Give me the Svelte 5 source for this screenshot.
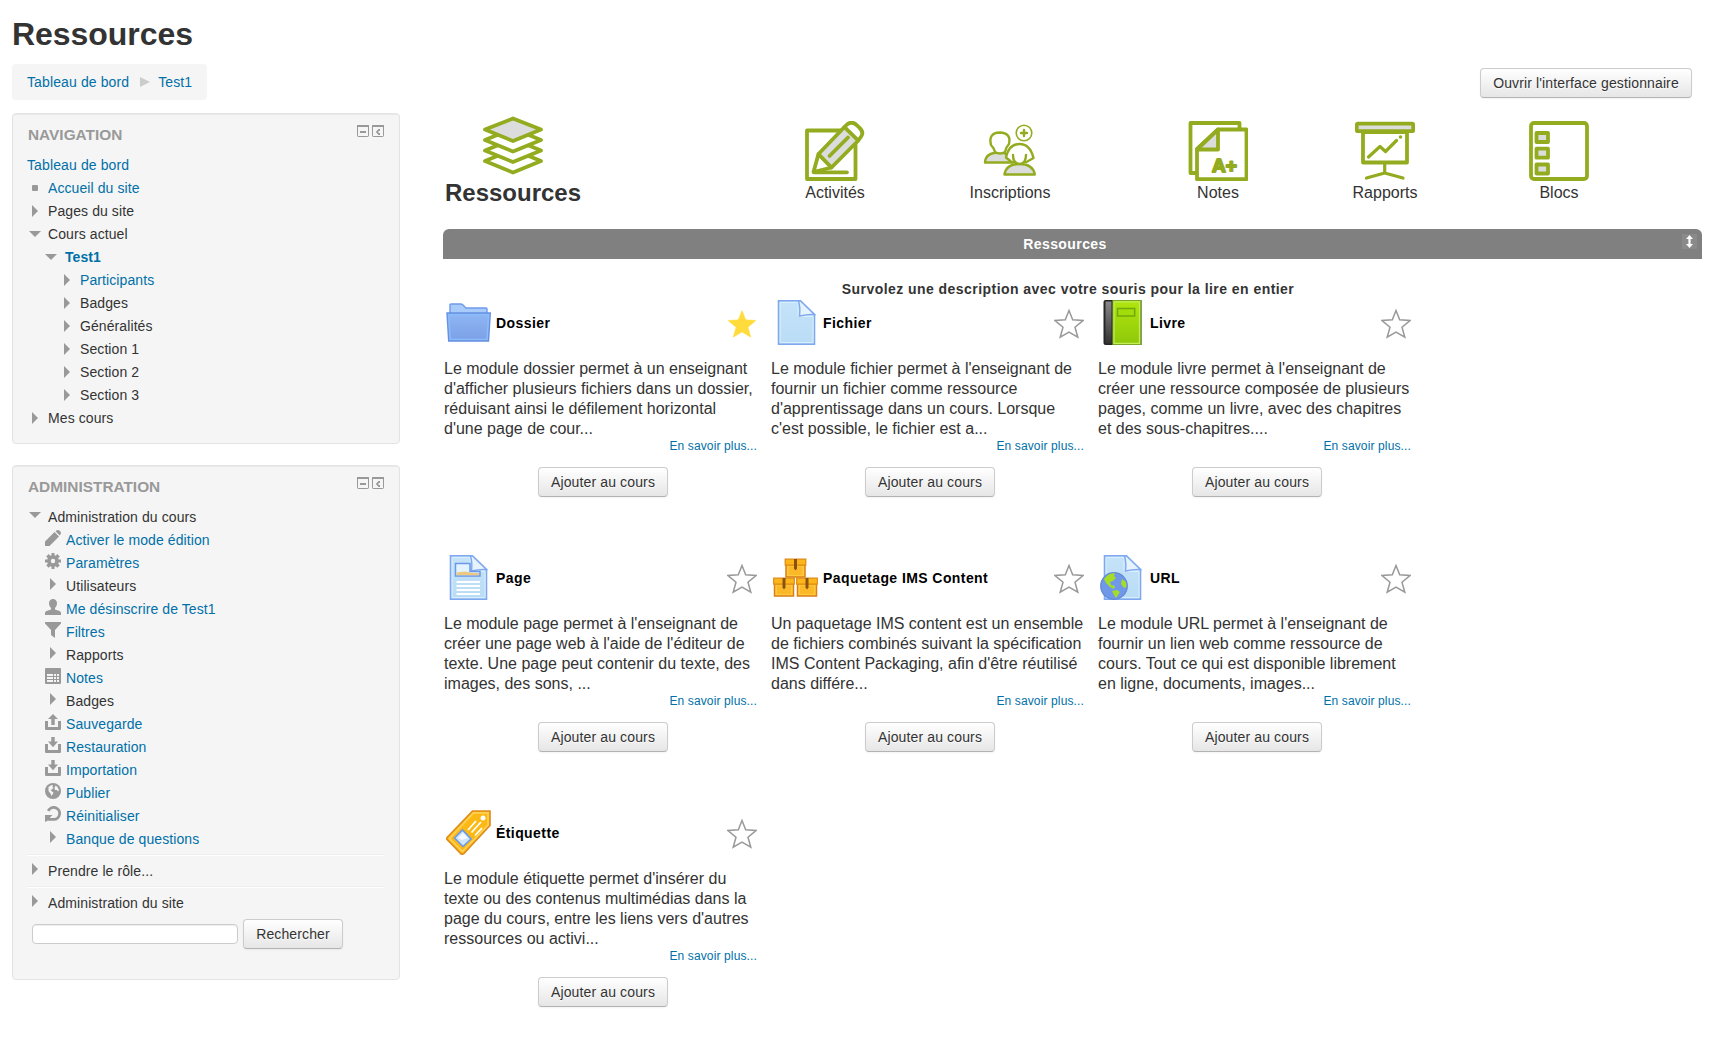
<script>
  const nav = [
    { icon: 'none', text: 'Tableau de bord', link: true, level: 'root' },
    { icon: 'dot', text: 'Accueil du site', link: true, level: 'l1' },
    { icon: 'right', text: 'Pages du site', level: 'l1' },
    { icon: 'down', text: 'Cours actuel', level: 'l1' },
    { icon: 'down', text: 'Test1', link: true, level: 'l2' },
    { icon: 'right', text: 'Participants', link: true, level: 'l3' },
    { icon: 'right', text: 'Badges', level: 'l3' },
    { icon: 'right', text: 'Généralités', level: 'l3' },
    { icon: 'right', text: 'Section 1', level: 'l3' },
    { icon: 'right', text: 'Section 2', level: 'l3' },
    { icon: 'right', text: 'Section 3', level: 'l3' },
    { icon: 'right', text: 'Mes cours', level: 'l1' }
  ];

  const admin = [
    { icon: 'pencil', text: 'Activer le mode édition', link: true },
    { icon: 'gear', text: 'Paramètres', link: true },
    { icon: 'right', text: 'Utilisateurs' },
    { icon: 'user', text: 'Me désinscrire de Test1', link: true },
    { icon: 'filter', text: 'Filtres', link: true },
    { icon: 'right', text: 'Rapports' },
    { icon: 'table', text: 'Notes', link: true },
    { icon: 'right', text: 'Badges' },
    { icon: 'upload', text: 'Sauvegarde', link: true },
    { icon: 'download', text: 'Restauration', link: true },
    { icon: 'download', text: 'Importation', link: true },
    { icon: 'globe', text: 'Publier', link: true },
    { icon: 'reset', text: 'Réinitialiser', link: true },
    { icon: 'right', text: 'Banque de questions', link: true }
  ];

  const tabs = ['Ressources', 'Activités', 'Inscriptions', 'Notes', 'Rapports', 'Blocs'];

  const cards = [
    { kind: 'folder', title: 'Dossier', starred: true, text: "Le module dossier permet à un enseignant\nd'afficher plusieurs fichiers dans un dossier,\nréduisant ainsi le défilement horizontal\nd'une page de cour..." },
    { kind: 'file', title: 'Fichier', text: "Le module fichier permet à l'enseignant de\nfournir un fichier comme ressource\nd'apprentissage dans un cours. Lorsque\nc'est possible, le fichier est a..." },
    { kind: 'book', title: 'Livre', text: "Le module livre permet à l'enseignant de\ncréer une ressource composée de plusieurs\npages, comme un livre, avec des chapitres\net des sous-chapitres...." },
    { kind: 'page', title: 'Page', text: "Le module page permet à l'enseignant de\ncréer une page web à l'aide de l'éditeur de\ntexte. Une page peut contenir du texte, des\nimages, des sons, ..." },
    { kind: 'ims', title: 'Paquetage IMS Content', text: "Un paquetage IMS content est un ensemble\nde fichiers combinés suivant la spécification\nIMS Content Packaging, afin d'être réutilisé\ndans différe..." },
    { kind: 'url', title: 'URL', text: "Le module URL permet à l'enseignant de\nfournir un lien web comme ressource de\ncours. Tout ce qui est disponible librement\nen ligne, documents, images..." },
    { kind: 'tag', title: 'Étiquette', text: "Le module étiquette permet d'insérer du\ntexte ou des contenus multimédias dans la\npage du cours, entre les liens vers d'autres\nressources ou activi..." }
  ];
</script>

{#snippet glyph(name)}
  <svg class="glyph" viewBox="0 0 16 16">
    {#if name === 'dot'}
      <rect x="5" y="5" width="6" height="6" rx="1" />
    {:else if name === 'right'}
      <path d="M5 2v12l6-6z" />
    {:else if name === 'down'}
      <path d="M2 5h12l-6 6z" />
    {:else if name === 'pencil'}
      <path d="M0 16v-4.500L9.500 2 14 6.500 4.500 16zM10.500 1.300l.9-.8q1.800-1.200 3.600.6 1.600 1.700.4 3.500l-.7.8z" />
    {:else if name === 'gear'}
      <path fill-rule="evenodd" d="M6.500 0h3v2.200l1.200.5 1.600-1.600 2.500 2.500-1.600 1.600.5 1.300H16v3h-2.300l-.5 1.200 1.600 1.600-2.500 2.500-1.600-1.600-1.200.5V16h-3v-2.300l-1.200-.5-1.600 1.600-2.500-2.500 1.600-1.600-.5-1.200H0v-3h2.300l.5-1.300-1.600-1.600 2.500-2.500 1.600 1.600 1.200-.5zM8 5.800a2.200 2.200 0 1 0 0 4.400 2.200 2.200 0 0 0 0-4.400z" />
    {:else if name === 'user'}
      <path d="M8 0c2.400 0 4 1.800 4 4.300 0 2-.9 3.700-2 4.700v1.500l4.500 1.500q1.500.6 1.500 2V16H0v-2q0-1.400 1.500-2L6 10.500V9C4.900 8 4 6.300 4 4.300 4 1.800 5.600 0 8 0z" />
    {:else if name === 'filter'}
      <path d="M0 0h16v1.500L10 8v8l-4-3V8L0 1.500z" />
    {:else if name === 'table'}
      <path fill-rule="evenodd" d="M1 0h14q1 0 1 1v14q0 1-1 1H1q-1 0-1-1V1q0-1 1-1zM2 6v2h6V6zm7 0v2h2V6zm3 0v2h2V6zM2 9v2h6V9zm7 0v2h2V9zm3 0v2h2V9zM2 12v2h6v-2zm7 0v2h2v-2zm3 0v2h2v-2z" />
    {:else if name === 'upload'}
      <path d="M8 0l5 5h-3.300v6H6.300V5H3zM0 7h3v6h10V7h3v8q0 1-1 1H1q-1 0-1-1z" />
    {:else if name === 'download'}
      <path d="M6.300 0h3.400v4.500H13l-5 5.700-5-5.700h3.300zM0 7h3v6h10V7h3v8q0 1-1 1H1q-1 0-1-1z" />
    {:else if name === 'globe'}
      <circle cx="8" cy="8" r="8" />
      <path class="cut" d="M3.500 4L6 2.200l2-.2-.7 1.500 1.200 1L7 6.500 5.500 7 7 8.500l1.500 1-1 2-1 1.500L5.500 10.500 3.500 8zM10.500 2.500l2 1.500 1.500 3-1 1.500-1-1.500h-2L9.500 5z" />
    {:else if name === 'reset'}
      <path d="M3.200 4.800A6 6 0 1 1 8.800 13.400H5" fill="none" stroke="#999" stroke-width="2.800" />
      <path d="M0 9h7.500L5 11.500V15l-2-.5L0 16z" />
    {/if}
  </svg>
{/snippet}

{#snippet controls()}
  <span class="controls">
    <svg viewBox="0 0 12 12"><rect x=".5" y=".5" width="11" height="11" rx=".7" /><path d="M0 1h12M3 7h6" /></svg>
    <svg viewBox="0 0 12 12"><rect x=".5" y=".5" width="11" height="11" rx=".7" /><path d="M0 1h12" /><path class="solid" d="M3.800 7l2.700-3h1.500v2H6.500v2H8v2H6.500z" /></svg>
  </span>
{/snippet}

{#snippet tabIcon(name)}
  <svg class="tab-icon" viewBox="0 0 60 60">
    {#if name === 'Ressources'}
      <path class="w" d="M2 45l28-11.500L58 45 30 56.500z" />
      <path class="w" d="M2 34.500L30 23l28 11.500L30 46z" />
      <path class="w" d="M2 24l28-11.500L58 24 30 35.500z" />
      <path class="g" d="M2 13.500L30 2.500l28 11-28 11.500z" />
    {:else if name === 'Activités'}
      <rect class="w" x="2" y="9.500" width="48.500" height="48.500" />
      <path class="w" d="M13.500 33L8.500 51l18-4.500z" />
      <path class="g" d="M13.500 33L39.500 6l13.800 13.500L26.500 46.500z" />
      <path class="w" d="M39.500 6l2.500-2.500q5-4 10 .8l2.200 2.200q5 4.500 2 9L53.300 19.500z" />
      <path d="M43 16.500L24.500 35M9 51.300h33" />
    {:else if name === 'Inscriptions'}
      <g class="fine">
        <path class="g" d="M5 41.500Q5.500 31.500 19.500 31.500q10 0 13 10z" />
        <path class="w" d="M15 31q-1-4-4-7-3-12 8.700-12.500Q31.500 12 29 23q-3 3-4 8-5 3-10 0z" />
        <path class="w" d="M26 36.500Q29 23 39.500 23T53.500 37l-7 4h-15z" />
        <path class="g" d="M24.500 53.500Q26 43 39.500 43T54.800 53.500z" />
        <path class="w" d="M33 34q0 8.500 6.500 9 6.500-.5 6.500-9" />
      </g>
      <circle class="w thin" cx="44" cy="12" r="7.800" />
      <path class="fine" d="M41 12h6M44 9v6" />
    {:else if name === 'Notes'}
      <path class="w" d="M2.500 2h49v50h-49z" />
      <path class="w" d="M30 8.500h28.500v49.700H9V28z" />
      <path class="g" d="M30 8.500v20H9z" />
      <text x="24" y="50.500">A+</text>
    {:else if name === 'Rapports'}
      <path class="w" d="M8 11h44v30.500H8z" />
      <rect class="g" x="1.700" y="2.700" width="56.500" height="7.500" rx="1" />
      <path class="lines" d="M29.700 41.500v10M11.500 57l18.200-5L48 57M13.500 36L25 25.500l5.500 5 11-11" />
      <circle class="s" cx="45.500" cy="16" r="1.800" />
    {:else}
      <rect class="w" x="2" y="2" width="56" height="56" rx="3" />
      <g class="g"><rect x="7.500" y="12" width="11.500" height="9" /><rect x="7.500" y="27.700" width="11.500" height="9" /><rect x="7.500" y="43.500" width="11.500" height="9" /></g>
    {/if}
  </svg>
{/snippet}

{#snippet sheet()}
  <path d="M4.500.8h21.800L40.500 14.500v29.700h-36z" fill="url(#paper)" stroke="#7fa8f0" stroke-width="1.600" />
  <path d="M6.200 2.500H24v14h15v26H6.200z" fill="none" stroke="#d9edfc" stroke-width="1" />
  <path d="M24.500 1q2 6 1 15 8-2 15-1.500L26.300.8z" fill="#e6f3fd" stroke="#7fa8f0" stroke-width="1.400" />
{/snippet}

{#snippet crate()}
  <path d="M1.500 6h19v12.500h-19z" fill="#ffcb3c" stroke="#d97f14" stroke-width="1.500" />
  <path d="M4 8h14v8.500H4z" fill="#fbb92a" />
  <path d="M.7.700h20.600v6H.7z" fill="#fdb61a" stroke="#dd8a14" stroke-width="1.200" />
  <path d="M9.500.5h3v9.500L11 12l-1.500-2z" fill="#8a520e" />
{/snippet}

{#snippet moduleIcon(kind)}
  <svg class="module-icon" viewBox="0 0 45 45">
    <defs>
      <linearGradient id="paper" x1="0" y1="0" x2="0" y2="1"><stop offset="0" stop-color="#c5e3f9" /><stop offset="1" stop-color="#b9dcf5" /></linearGradient>
      <linearGradient id="blue" x1="0" y1="0" x2="0" y2="1"><stop offset="0" stop-color="#8fb6f5" /><stop offset="1" stop-color="#7ba0e6" /></linearGradient>
      <linearGradient id="green" x1="0" y1="0" x2="0" y2="1"><stop offset="0" stop-color="#b0e60e" /><stop offset="1" stop-color="#8fc80a" /></linearGradient>
      <linearGradient id="dark" x1="0" y1="0" x2="0" y2="1"><stop offset="0" stop-color="#888" /><stop offset="1" stop-color="#333" /></linearGradient>
    </defs>
    {#if kind === 'folder'}
      <path d="M4 14V5q0-1 1-1h9.500q1.500 0 2.500 1l3 3h20q1 0 1 1v6z" fill="#a9cbf9" stroke="#6f9beb" stroke-width="1.400" />
      <path d="M1 13h43.300L42.500 41H2.700z" fill="url(#blue)" stroke="#6691e2" stroke-width="1.400" />
      <path d="M2.700 14.700h39.900L41 39.400H4.200z" fill="none" stroke="#8cbcfa" stroke-width="1.400" />
    {:else if kind === 'file'}
      <g transform="translate(1 0)">{@render sheet()}</g>
    {:else if kind === 'book'}
      <path d="M3.500 2q0-2 2-2h36v45h-36q-2 0-2-2z" fill="#262626" />
      <path d="M5.500 1.500h6v42h-6z" fill="url(#dark)" />
      <path d="M13 .7h27.800v43.600H13z" fill="url(#green)" stroke="#7aa826" stroke-width="1.200" />
      <path d="M14 1.800h25.500v41.500H14z" fill="none" stroke="#c3ee57" stroke-width="1.200" />
      <path d="M17.500 8.500h17.200v7.500H17.500z" fill="#a2dc0b" stroke="#72a80d" stroke-width="1.500" />
    {:else if kind === 'page'}
      {@render sheet()}
      <path d="M9.500 8.500H24v8h10v4.500H9.500z" fill="#e3f3ff" stroke="#6b98e8" stroke-width="1.500" />
      <path d="M10.500 17.500l8-1 9 1.500h5.500v2.200H10.500z" fill="#ebc982" />
      <path d="M10.500 27H34M10.500 31H34M10.500 35H34M10.500 39H34" stroke="#fff" stroke-width="1.800" />
    {:else if kind === 'ims'}
      <g transform="translate(11.500 3.500)">{@render crate()}</g>
      <g transform="translate(0 22.500)">{@render crate()}</g>
      <g transform="translate(23 22.500)">{@render crate()}</g>
    {:else if kind === 'url'}
      {@render sheet()}
      <circle cx="14" cy="31" r="13.300" fill="#6f99e8" stroke="#6288d5" stroke-width="1.200" />
      <path d="M4 24q4-6 11-6l-1 3 2 2-3 3-3 1 1 3 4 1-1 3-4-2-4-4zM12 36l5-1 3 2-2 3-2 3-2-3zM22 24l4 3 .5 5-2.500 1-3-4z" fill="#a5dc28" />
    {:else}
      <path d="M26.500 1H44v14.500L18 43.500q-1.500 1.500-3.500 0L1.500 30q-1.500-1.500 0-3z" fill="#fcb813" stroke="#dd8c1c" stroke-width="1.600" />
      <path d="M27.500 3H42v12L16.500 41.500 3.500 28.500z" fill="none" stroke="#ffd45e" stroke-width="1.500" />
      <circle cx="37" cy="8" r="2.500" fill="#fff" />
      <path d="M22 20l8-9M25.500 22.500l9.500-10.500M29 25.500L36 18" stroke="#fff" stroke-width="1.800" />
      <path d="M8.500 28l8-8 8.500 9-8 7.500z" fill="#cfe6fa" stroke="#6b98e8" stroke-width="1.600" />
      <path d="M12 28l5-5 5 5-6 2z" fill="#f3faff" />
    {/if}
  </svg>
{/snippet}

<div class="page">
  <h1>Ressources</h1>
  <div class="topbar">
    <nav class="crumbs"><a href="#board">Tableau de bord</a><i></i><a href="#course">Test1</a></nav>
    <button class="btn wide">Ouvrir l'interface gestionnaire</button>
  </div>

  <div class="columns">
    <aside>
      <section class="block nav-block">
        <header><h2>NAVIGATION</h2>{@render controls()}</header>
        <ul>
          {#each nav as item}
            <li class={item.level}>
              {#if item.icon !== 'none'}{@render glyph(item.icon)}{/if}
              {#if item.link}<a href="#nav">{item.text}</a>{:else}<span>{item.text}</span>{/if}
            </li>
          {/each}
        </ul>
      </section>

      <section class="block admin-block">
        <header><h2>ADMINISTRATION</h2>{@render controls()}</header>
        <ul class="raised">
          <li class="l1">{@render glyph('down')}<span>Administration du cours</span></li>
          {#each admin as item}
            <li class="sub">
              {@render glyph(item.icon)}
              {#if item.link}<a href="#admin">{item.text}</a>{:else}<span>{item.text}</span>{/if}
            </li>
          {/each}
        </ul>
        <hr />
        <ul class="raised"><li class="l1">{@render glyph('right')}<span>Prendre le rôle...</span></li></ul>
        <hr />
        <ul class="raised"><li class="l1">{@render glyph('right')}<span>Administration du site</span></li></ul>
        <form>
          <input type="text" aria-label="Rechercher" />
          <button class="btn search" type="button">Rechercher</button>
        </form>
      </section>
    </aside>

    <main>
      <div class="tabs">
        {#each tabs as tab, i}
          <div class="tab" class:active={i === 0}>
            {@render tabIcon(tab)}
            <span>{tab}</span>
          </div>
        {/each}
      </div>

      <div class="bar">
        <strong>Ressources</strong>
        <svg viewBox="0 0 15 15"><path d="M7.500 1L11 5H8.600v5H11l-3.500 4L4 10h2.400V5H4z" /></svg>
      </div>
      <p class="hint">Survolez une description avec votre souris pour la lire en entier</p>

      <div class="cards">
        {#each cards as card}
          <article>
            <div class="head">
              {@render moduleIcon(card.kind)}
              <h3>{card.title}</h3>
              <svg class="star" class:on={card.starred} viewBox="0 0 30 30"><path d="M15 1.500l3.700 9.300 10.300.7-8 6.700 2.800 10L15 23l-8.800 5.200 2.800-10-8-6.700 10.300-.7z" /></svg>
            </div>
            <p class="text">{card.text}</p>
            <a class="more" href="#more">En savoir plus...</a>
            <button class="btn">Ajouter au cours</button>
          </article>
        {/each}
      </div>
    </main>
  </div>
</div>

<style>
  :global(body) { background: #fff; }
  .page {
    box-sizing: border-box;
    width: 1718px;
    height: 1058px;
    padding: 14px 16px 0 12px;
    overflow: hidden;
    font: 14px/20px "Liberation Sans", Arial, sans-serif;
    color: #333;
  }
  h1, h2, h3, p, ul { margin: 0; padding: 0; }
  ul { list-style: none; }
  a { color: #0070a8; text-decoration: none; }
  h1 { font-size: 32px; line-height: 40px; height: 50px; letter-spacing: -.05px; }

  .topbar { display: flex; justify-content: space-between; height: 49px; padding-right: 10px; }
  .crumbs { display: flex; align-items: center; box-sizing: border-box; width: 195px; height: 36px; padding: 0 0 0 15px; background: #f5f5f5; border-radius: 4px; letter-spacing: .12px; white-space: nowrap; }
  .crumbs i { margin: 0 8px 0 11px; border: solid transparent; border-width: 5px 0 5px 10px; border-left-color: #ccc; }
  .btn {
    box-sizing: border-box;
    width: 130px;
    height: 30px;
    padding: 0;
    font: 14px/20px "Liberation Sans", Arial, sans-serif;
    letter-spacing: .13px;
    color: #333;
    text-shadow: 0 1px 1px rgba(255, 255, 255, .75);
    white-space: nowrap;
    background: linear-gradient(#fff, #e6e6e6);
    border: 1px solid #ccc;
    border-bottom-color: #b3b3b3;
    border-radius: 4px;
    box-shadow: inset 0 1px 0 rgba(255, 255, 255, .2), 0 1px 2px rgba(0, 0, 0, .05);
  }
  .wide { width: 212px; margin-top: 4px; }

  .columns { display: flex; gap: 43px; }
  aside { width: 388px; }
  .block { box-sizing: border-box; padding: 10px 14px 0; background: #f5f5f5; border: 1px solid #e3e3e3; border-radius: 4px; box-shadow: inset 0 1px 1px rgba(0, 0, 0, .05); }
  .nav-block { height: 331px; margin-bottom: 21px; }
  .admin-block { height: 515px; }
  .block header { display: flex; justify-content: space-between; height: 29px; padding-left: 1px; }
  h2 { font-size: 15.400px; line-height: 22px; color: #999; }
  .controls { display: flex; gap: 3px; padding: 1px 1px 0 0; }
  .controls svg { width: 12px; height: 12px; fill: none; stroke: #999; }
  .controls path { stroke-width: 2; }
  .controls .solid { fill: #999; stroke: none; }
  li { display: flex; align-items: center; height: 23px; white-space: nowrap; letter-spacing: .09px; }
  .glyph { flex: none; width: 16px; height: 16px; fill: #999; }
  .cut { fill: #f5f5f5; }
  .root { letter-spacing: .12px; }
  .l1 .glyph { margin-right: 5px; }
  .l2 { padding-left: 16px; font-weight: bold; }
  .l2 .glyph { margin-right: 6px; }
  .l3 { padding-left: 32px; }
  .l3 .glyph { margin-right: 5px; }
  .sub { padding-left: 18px; }
  .sub .glyph { margin-right: 5px; }
  .raised .glyph { margin-top: -4px; }
  hr { height: 1px; margin: 4px 0 3px; border: 0; background: #eee; border-bottom: 1px solid #fff; }
  form { display: flex; align-items: center; gap: 5px; padding: 5px 0 0 5px; }
  input { box-sizing: border-box; width: 206px; height: 20px; padding: 0; border: 1px solid #ccc; border-radius: 4px; background: #fff; box-shadow: inset 0 1px 1px rgba(0, 0, 0, .075); }
  .search { width: 100px; }

  main { flex: 1; }
  .tabs { display: flex; height: 116px; }
  .tab { display: flex; flex-direction: column; align-items: center; flex: none; gap: 1px; width: 140px; padding-top: 8px; font-size: 16px; line-height: 22px; }
  .tab:nth-child(2) { margin-left: 182px; }
  .tab:nth-child(3) { margin-left: 35px; }
  .tab:nth-child(4) { margin-left: 68px; }
  .tab:nth-child(5) { margin-left: 27px; }
  .tab:nth-child(6) { margin-left: 34px; }
  .active { padding-top: 3px; font-size: 24px; line-height: 32px; font-weight: bold; }
  .tab-icon { width: 60px; height: 60px; fill: none; stroke: #93ac1f; stroke-width: 3.800; stroke-linejoin: round; stroke-linecap: round; }
  .tab-icon .w { fill: #fff; }
  .tab-icon .g { fill: #dcdcdc; }
  .tab-icon .fine { stroke-width: 2.400; }
  .tab-icon .thin { stroke-width: 1.600; }
  .tab-icon .lines { stroke-width: 3.200; }
  .tab-icon .s, .tab-icon text { fill: #93ac1f; }
  .tab-icon .s { stroke: none; }
  .tab-icon text { font: bold 19px "Liberation Sans", Arial, sans-serif; stroke-width: 2; }

  .bar { display: grid; grid-template-columns: 1fr 15px; height: 30px; background: #808080; border-radius: 6px 6px 0 0; color: #fff; }
  .bar strong { text-align: center; line-height: 30px; letter-spacing: .42px; }
  .bar svg { justify-self: end; width: 15px; height: 15px; margin: 5px 5px 0 0; fill: #fff; background: #8a8a8a; }
  .hint { height: 21px; padding-top: 20px; width: 1250px; text-align: center; font-weight: bold; letter-spacing: .45px; }

  .cards { display: grid; grid-template-columns: repeat(3, 320px); grid-auto-rows: 255px; column-gap: 7px; }
  article { display: flex; flex-direction: column; align-items: center; }
  .head { display: flex; align-items: center; align-self: stretch; height: 45px; padding: 0 6px 0 3px; }
  .module-icon { flex: none; width: 45px; height: 45px; margin-right: 5px; }
  h3 { flex: 1; font-size: 14px; line-height: 20px; color: #000; letter-spacing: .42px; white-space: nowrap; }
  .star { width: 30px; height: 30px; margin-top: 2px; fill: #fff; stroke: #999; stroke-width: 1.500; }
  .star.on { fill: #ffdc3c; stroke: #ffdc3c; stroke-width: .5; }
  .text { align-self: stretch; margin-top: 14px; padding-left: 1px; font-size: 16px; line-height: 20px; white-space: pre; }
  .more { align-self: flex-end; margin: -1px 6px 13px 0; font-size: 12px; line-height: 16px; letter-spacing: .13px; }
</style>
